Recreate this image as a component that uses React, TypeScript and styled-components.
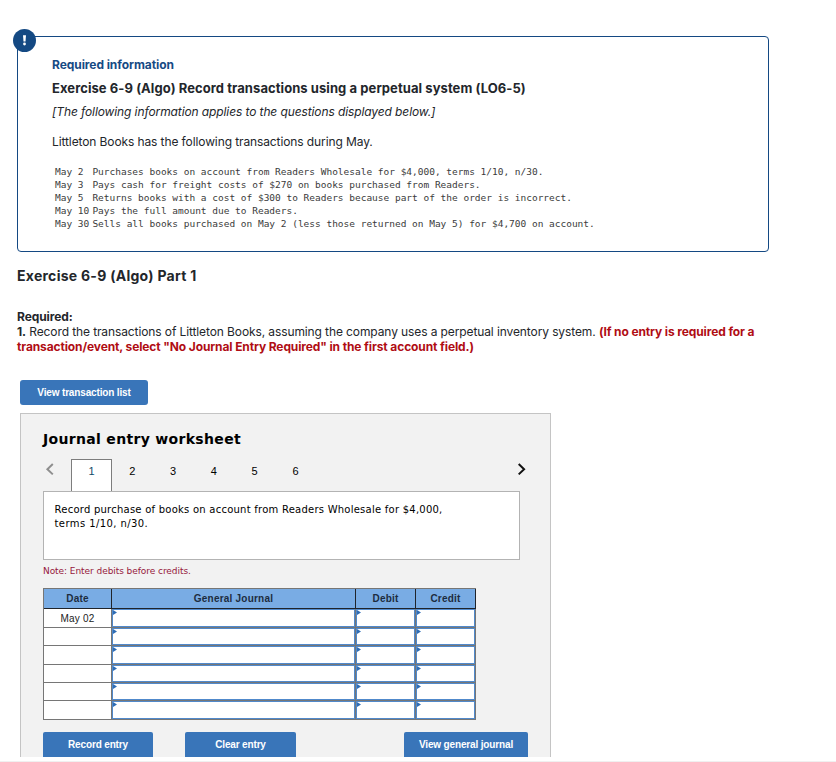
import React from 'react';
import styled, { createGlobalStyle, css } from 'styled-components';

const Global = createGlobalStyle`
  *, *::before, *::after { box-sizing: border-box; }
  body { margin: 0; background: #fff; overflow: hidden; }
`;

const Page = styled.main`
  display: flex;
  flex-direction: column;
  height: 762px;
  padding: 36px 0 0 17px;
  border-bottom: 1px solid #f0f0f0;
  font: 12px/15px Inter, sans-serif;
  letter-spacing: -0.105px;
  color: #23262b;
`;

const InfoCard = styled.section`
  position: relative;
  width: 752px;
  height: 216px;
  padding: 20px 34px 0;
  border: 1px solid #144983;
  border-radius: 4px;
`;

const AlertBadge = styled.svg`
  position: absolute;
  left: -5px;
  top: -8px;
  width: 23px;
  height: 23px;
`;

const InfoLabel = styled.div`
  font-weight: 700;
  letter-spacing: -0.07px;
  color: #164a84;
`;

const InfoTitle = styled.h1`
  margin: 8px 0 0;
  font-size: 13px;
  line-height: 16px;
  font-weight: 700;
  letter-spacing: 0.07px;
  white-space: nowrap;
`;

const Context = styled.p`
  margin: 8px 0 0;
  font-style: italic;
`;

const Intro = styled.p`
  margin: 15px 0 0;
`;

const Transactions = styled.div`
  margin: 16px 0 0 3px;
  font: 9.5px/13px 'DejaVu Sans Mono', monospace;
  letter-spacing: -0.011px;
  color: #3b3b3b;
`;

const Transaction = styled.div`
  display: grid;
  grid-template-columns: 37.4px 1fr;
  white-space: nowrap;
`;

const PartTitle = styled.h2`
  margin: 15px 0 0;
  font-size: 14px;
  line-height: 18px;
  font-weight: 700;
  letter-spacing: 0.27px;
`;

const Requirement = styled.div`
  margin-top: 24px;
  white-space: nowrap;
`;

const Warning = styled.b`
  color: #b00d14;
  letter-spacing: -0.12px;
`;

const Button = styled.button<{ $width: number; $flat?: boolean }>`
  flex: none;
  width: ${(p) => p.$width}px;
  height: 25px;
  padding: 0;
  border: 0;
  border-radius: ${(p) => (p.$flat ? '2px 2px 0 0' : '3px')};
  background: #3975b9;
  color: #fff;
  font: bold 10px/25px 'Liberation Sans', Arial, sans-serif;
  letter-spacing: -0.15px;
`;

const ListAction = styled.div`
  display: flex;
  margin: 26px 0 8px 3px;
`;

const Worksheet = styled.section`
  width: 531px;
  height: 344px;
  margin-left: 3px;
  padding: 16px 22px 0;
  border: 1px solid #c4c4c4;
  border-bottom: 0;
  background: #f2f2f2;
  font-family: 'DejaVu Sans', Verdana, sans-serif;
  color: #000;
`;

const WorksheetTitle = styled.h3`
  margin: 0;
  font-size: 14px;
  line-height: 18px;
  letter-spacing: 0.32px;
`;

const TabBar = styled.nav`
  display: flex;
  width: 487px;
  height: 32px;
  margin-top: 11px;
`;

const Arrow = styled.svg<{ $end?: boolean }>`
  flex: none;
  width: 12px;
  height: 14px;
  margin: 3px 15px 0 1px;
  ${(p) => p.$end && css`margin: 3px 2px 0 auto;`}
`;

const Tab = styled.div<{ $active?: boolean }>`
  width: 40.8px;
  text-align: center;
  font: 11px/22px 'Liberation Sans', Arial, sans-serif;
  border: 1px solid transparent;
  border-bottom: 0;
  ${(p) => p.$active && css`
    border-color: #7d7d7d;
    background: #fff;
    color: #124a66;
  `}
`;

const Prompt = styled.p`
  width: 477px;
  height: 69px;
  margin: 0;
  padding: 11px 60px 0 10.5px;
  border: 1px solid #b3b3b3;
  background: #fff;
  font-size: 10px;
  line-height: 14px;
  letter-spacing: 0.242px;
`;

const PromptTail = styled.span`
  letter-spacing: 0.42px;
`;

const Note = styled.p`
  margin: 5px 0 0;
  font-size: 9px;
  line-height: 12px;
  letter-spacing: -0.06px;
  color: #96183c;
`;

const Journal = styled.div`
  width: 433px;
  margin-top: 11px;
  border: 1px solid #767676;
  background: #767676;
  font: 10px/18px 'Liberation Sans', Arial, sans-serif;
`;

const JournalHead = styled.div`
  display: grid;
  grid-template-columns: 67px 243px 59px 59px;
  gap: 1px;
  width: 432px;
  height: 20px;
  padding-bottom: 1px;
  background: #20242a;
`;

const HeadCell = styled.div`
  background: #79ace4;
  font-weight: 700;
  line-height: 19px;
  letter-spacing: 0.22px;
  text-align: center;
  color: #1d2c40;
`;

const JournalBody = styled.div`
  display: grid;
  grid-template-columns: 67px 243px 59px 59px;
  grid-template-rows: 18px 17px 18px 17px 17px 18px;
  gap: 1px;
`;

const DateCell = styled.div`
  background: #fff;
  padding-top: 1px;
  text-align: center;
  letter-spacing: 0.2px;
  color: #222;
`;

const EntryCell = styled.div`
  border: 1px solid #5089cb;
  background: #fff;
`;

const Marker = styled.svg`
  display: block;
  width: 4px;
  height: 5px;
`;

const Actions = styled.div`
  display: flex;
  width: 485px;
  margin-top: 12px;
  gap: 32px;
  & > :last-child { margin-left: auto; }
`;

const transactions = [
  ['May 2', 'Purchases books on account from Readers Wholesale for $4,000, terms 1/10, n/30.'],
  ['May 3', 'Pays cash for freight costs of $270 on books purchased from Readers.'],
  ['May 5', 'Returns books with a cost of $300 to Readers because part of the order is incorrect.'],
  ['May 10', 'Pays the full amount due to Readers.'],
  ['May 30', 'Sells all books purchased on May 2 (less those returned on May 5) for $4,700 on account.'],
];

const dates = ['May 02', '', '', '', '', ''];

function Entry() {
  return (
    <EntryCell>
      <Marker viewBox="0 0 4 5"><path d="M0 0 4 2.5 0 5z" fill="#2f6db5" /></Marker>
    </EntryCell>
  );
}

export default function App() {
  return (
    <>
      <Global />
      <Page>
        <InfoCard>
          <AlertBadge viewBox="0 0 23 23">
            <circle cx="11.5" cy="11.5" r="11.5" fill="#144983" />
            <path d="M10 6.3h3l-.5 6.3h-2z" fill="#fff" />
            <circle cx="11.5" cy="15" r="1.4" fill="#fff" />
          </AlertBadge>
          <InfoLabel>Required information</InfoLabel>
          <InfoTitle>Exercise 6-9 (Algo) Record transactions using a perpetual system (LO6-5)</InfoTitle>
          <Context>[The following information applies to the questions displayed below.]</Context>
          <Intro>Littleton Books has the following transactions during May.</Intro>
          <Transactions>
            {transactions.map(([date, text]) => (
              <Transaction key={date}>
                <span>{date}</span>
                <span>{text}</span>
              </Transaction>
            ))}
          </Transactions>
        </InfoCard>

        <PartTitle>Exercise 6-9 (Algo) Part 1</PartTitle>
        <Requirement>
          <b>Required:</b>
          <br />
          <b>1.</b> Record the transactions of Littleton Books, assuming the company uses a perpetual inventory system.{' '}
          <Warning>
            (If no entry is required for a
            <br />
            transaction/event, select "No Journal Entry Required" in the first account field.)
          </Warning>
        </Requirement>

        <ListAction>
          <Button $width={128}>View transaction list</Button>
        </ListAction>

        <Worksheet>
          <WorksheetTitle>Journal entry worksheet</WorksheetTitle>
          <TabBar>
            <Arrow viewBox="0 0 12 14"><path d="M8.8 2 3.4 7.2l5.4 5.2" fill="none" stroke="#8f8f8f" strokeWidth="2" /></Arrow>
            {[1, 2, 3, 4, 5, 6].map((n) => (
              <Tab key={n} $active={n === 1}>{n}</Tab>
            ))}
            <Arrow $end viewBox="0 0 12 14"><path d="m2.7 2 5.4 5.2-5.4 5.2" fill="none" stroke="#111" strokeWidth="2" /></Arrow>
          </TabBar>
          <Prompt>
            Record purchase of books on account from Readers Wholesale for $4,000,
            <br />
            <PromptTail>terms 1/10, n/30.</PromptTail>
          </Prompt>
          <Note>Note: Enter debits before credits.</Note>
          <Journal>
            <JournalHead>
              {['Date', 'General Journal', 'Debit', 'Credit'].map((title) => (
                <HeadCell key={title}>{title}</HeadCell>
              ))}
            </JournalHead>
            <JournalBody>
              {dates.map((date, i) => (
                <React.Fragment key={i}>
                  <DateCell>{date}</DateCell>
                  <Entry />
                  <Entry />
                  <Entry />
                </React.Fragment>
              ))}
            </JournalBody>
          </Journal>
          <Actions>
            <Button $flat $width={110}>Record entry</Button>
            <Button $flat $width={111}>Clear entry</Button>
            <Button $flat $width={124}>View general journal</Button>
          </Actions>
        </Worksheet>
      </Page>
    </>
  );
}
